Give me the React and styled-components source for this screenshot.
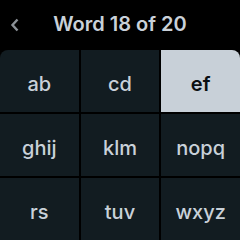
import React from "react";
import styled, { createGlobalStyle } from "styled-components";

const GlobalStyle = createGlobalStyle`
  html, body {
    margin: 0;
    padding: 0;
    background: #000;
  }
  body {
    font-family: Inter, "Noto Sans", sans-serif;
  }
`;

const Screen = styled.div`
  width: 240px;
  height: 240px;
  background: #000;
  display: flex;
  flex-direction: column;
  overflow: hidden;
`;

const Header = styled.div`
  height: 50px;
  display: flex;
  align-items: center;
  position: relative;
  justify-content: center;
`;

const BackButton = styled.button`
  position: absolute;
  left: 8px;
  top: 16px;
  width: 14px;
  height: 18px;
  padding: 0;
  border: none;
  background: none;
  display: flex;
  align-items: center;
  justify-content: center;
`;

const Title = styled.h1`
  margin: 0;
  font-size: 20px;
  font-weight: 600;
  color: #c9d1d9;
  letter-spacing: 0;
  line-height: 1;
  padding-bottom: 3px;
`;

const Grid = styled.div`
  flex: 1;
  display: grid;
  grid-template-columns: repeat(3, 1fr);
  grid-template-rows: repeat(3, 1fr);
  gap: 2px;
  border-radius: 8px 8px 0 0;
  overflow: hidden;
`;

const Key = styled.div`
  display: flex;
  align-items: center;
  justify-content: center;
  padding-top: 5px;
  background: ${(p) => (p.active ? "#c8d0d8" : "#121c21")};
  color: ${(p) => (p.active ? "#0b0f12" : "#c9d1d9")};
  font-size: 20px;
  font-weight: ${(p) => (p.active ? 600 : 500)};
`;

const keys = ["ab", "cd", "ef", "ghij", "klm", "nopq", "rs", "tuv", "wxyz"];

const App = () => {
  return (
    <Screen>
      <GlobalStyle />
      <Header>
        <BackButton aria-label="back">
          <svg width="10" height="14" viewBox="0 0 10 14">
            <path
              d="M7.5 1.5 L2.5 7 L7.5 12.5"
              fill="none"
              stroke="#8b9197"
              strokeWidth="2.4"
            />
          </svg>
        </BackButton>
        <Title>Word 18 of 20</Title>
      </Header>
      <Grid>
        {keys.map((k) => (
          <Key key={k} active={k === "ef"}>
            {k}
          </Key>
        ))}
      </Grid>
    </Screen>
  );
};

export default App;
